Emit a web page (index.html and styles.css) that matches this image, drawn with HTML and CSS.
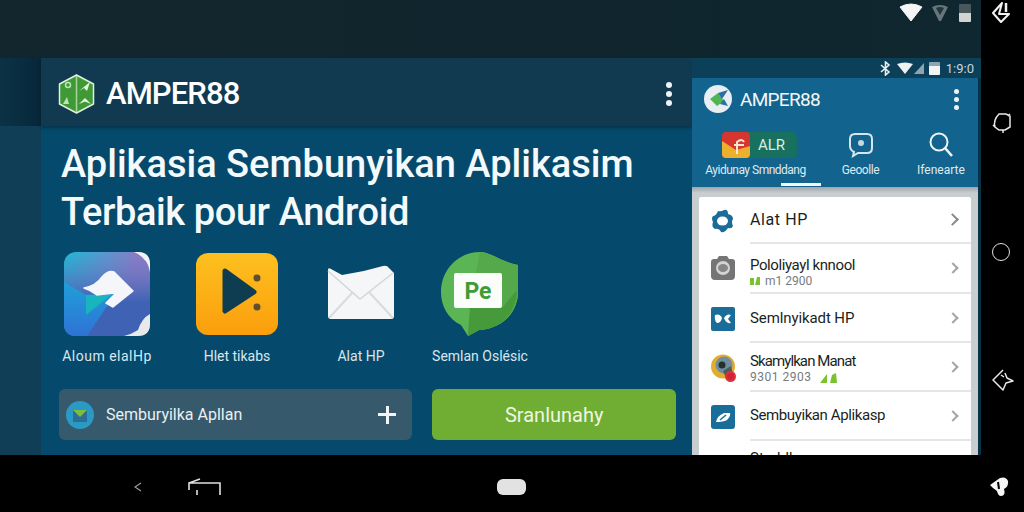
FILE: index.html
```html
<!DOCTYPE html>
<html lang="en">
<head>
    <meta charset="UTF-8">
    <title>AMPER88</title>
    <link rel="stylesheet" href="styles.css">
</head>
<body>
<div class="screen">

    <div class="main">
        <!-- top dark band -->
        <div class="top-band">
            <svg class="top-wifi" width="24" height="19" viewBox="0 0 24 19"><path d="M1 4Q12 -2 23 4L12 18Z" fill="#f4f6f6" stroke="#f4f6f6" stroke-linejoin="round"/></svg>
            <svg class="top-cell" width="18" height="19" viewBox="0 0 18 19"><path d="M1 4Q9 0 17 4L10 18H8Z" fill="#66767a"/><path d="M5 5Q9 3 13 5L9 12Z" fill="#22363d"/></svg>
            <div class="top-batt"></div>
        </div>

        <div class="content">
            <!-- left sliver -->
            <div class="sliver">
                <div class="sliver-head"></div>
            </div>

            <!-- center panel -->
            <div class="panel">
                <div class="panel-head">
                    <svg width="37" height="40" viewBox="0 0 37 40">
                        <path d="M18.500 1L35.500 10V30L18.500 39L1.500 30V10Z" fill="#3f9a35" stroke="#dff0dc" stroke-width="1.500" stroke-linejoin="round"/>
                        <path d="M18.500 2V38" stroke="#a9d4a0" stroke-width="1.500"/>
                        <circle cx="10" cy="11" r="2.500" fill="none" stroke="#bfe2b8" stroke-width="1.500"/>
                        <path d="M5 30L9 23L11 30Z" fill="#bfe2b8"/>
                        <path d="M21 17L32 8L29 17L26 14Z" fill="#e6f4e2"/>
                        <path d="M21 30L27 24L33 30L27 27.500Z" fill="#e6f4e2"/>
                    </svg>
                    <span class="brand">AMPER88</span>
                    <div class="dots"><i></i><i></i><i></i></div>
                </div>

                <div class="panel-body">
                    <h1>Aplikasia Sembunyikan Aplikasim<br><span class="line-two">Terbaik pour Android</span></h1>

                    <div class="apps">
                        <div class="app app-1">
                            <svg width="86" height="84" viewBox="0 0 86 84">
                                <defs>
                                    <linearGradient id="g1" x1="0" y1="0" x2="1" y2="0.300">
                                        <stop offset="0" stop-color="#1cb9d6"/>
                                        <stop offset="0.800" stop-color="#8a7cc6"/>
                                    </linearGradient>
                                    <linearGradient id="g1c" x1="0" y1="0" x2="0" y2="1">
                                        <stop offset="0" stop-color="#6a76c0" stop-opacity="0"/>
                                        <stop offset="0.600" stop-color="#3f62b4"/>
                                    </linearGradient>
                                    <linearGradient id="g1b" x1="0" y1="0" x2="0" y2="1">
                                        <stop offset="0" stop-color="#1fa0d8"/>
                                        <stop offset="1" stop-color="#2f72d6"/>
                                    </linearGradient>
                                </defs>
                                <rect width="86" height="84" rx="12" fill="url(#g1)"/>
                                <rect width="86" height="84" rx="12" fill="url(#g1c)"/>
                                <path d="M0 30V72Q0 84 12 84H23L52 41L22 43Z" fill="url(#g1b)"/>
                                <path d="M22 43H47L22 63Z" fill="#18b5bf"/>
                                <path d="M70 0H74Q86 0 86 12V20Q84 6 70 0Z" fill="#f2f3f6"/>
                                <path d="M60 84H74Q86 84 86 72V62Q78 66 74 78Q68 82 60 84Z" fill="#e8e9eb"/>
                                <path d="M20 36Q32 34 38 25Q44 18 50 20L69 39L49 55L42 51L52 41Q40 42 33 43Q27 38 20 36Z" fill="#f5f6fa" stroke="#f5f6fa" stroke-linejoin="round" stroke-width="1.500"/>
                            </svg>
                            <span class="app-label">Aloum elalHp</span>
                        </div>
                        <div class="app app-2">
                            <svg width="82" height="84" viewBox="0 0 82 84">
                                <defs>
                                    <linearGradient id="g2" x1="0" y1="0" x2="0" y2="1">
                                        <stop offset="0" stop-color="#fdc01f"/>
                                        <stop offset="1" stop-color="#fb9e0c"/>
                                    </linearGradient>
                                </defs>
                                <rect y="1" width="82" height="82" rx="12" fill="url(#g2)"/>
                                <path d="M29 19L58 40L29 59Z" fill="#0e3c50" stroke="#0e3c50" stroke-width="5" stroke-linejoin="round"/>
                                <circle cx="61" cy="26" r="3.500" fill="#5d5030"/>
                                <circle cx="61" cy="55" r="3.500" fill="#5d5030"/>
                            </svg>
                            <span class="app-label">Hlet tikabs</span>
                        </div>
                        <div class="app app-3">
                            <svg width="68" height="84" viewBox="0 0 68 84">
                                <path d="M1 18Q1 15 4 17L15 23Q36 20 56 14Q60 13 62 16L67 21V64Q67 67 64 67H4Q1 67 1 64Z" fill="#f4f6f7"/>
                                <path d="M1 19L33 47L66 21" fill="none" stroke="#d3d7da" stroke-width="1.500"/>
                                <path d="M2 66L26 40M66 66L42 40" stroke="#d8dcdf" stroke-width="2"/>
                            </svg>
                            <span class="app-label">Alat HP</span>
                        </div>
                        <div class="app app-4">
                            <svg width="78" height="84" viewBox="0 0 78 84">
                                <path d="M39 0C50 0 58 9 77 13V40C77 61 60 77 38 78L27 84L20 73C7 67 0 54 0 40C0 18 17 0 39 0Z" fill="#5cb555"/>
                                <path d="M39 0C50 0 58 9 77 13V40C77 61 60 77 38 78L27 84L29 50Z" fill="#56a94a"/>
                                <path d="M29 56H61L76 38C76 60 60 77 38 78L27 84Z" fill="#479a3a"/>
                                <rect x="13" y="21" width="48" height="35" rx="2" fill="#fbfdfb"/>
                                <text x="37" y="47" class="pe">Pe</text>
                            </svg>
                            <span class="app-label">Semlan Oslésic</span>
                        </div>
                    </div>

                    <div class="actions">
                        <div class="search-box">
                            <svg width="28" height="30" viewBox="0 0 28 30">
                                <circle cx="14" cy="15" r="14" fill="#2a9ac4"/>
                                <path d="M7 10H21V22H7Z" fill="#2c6e96"/>
                                <path d="M7 10H21L14 17Z" fill="#7cbe3c"/>
                            </svg>
                            <span>Semburyilka Apllan</span>
                            <span class="plus"></span>
                        </div>
                        <div class="go-btn">Sranlunahy</div>
                    </div>
                </div>
            </div>

            <!-- phone panel on the right -->
            <div class="phone">
                <div class="phone-status">
                    <svg width="13" height="15" viewBox="0 0 13 15"><path d="M2 4L10 11L6.500 14V1L10 4L2 11" fill="none" stroke="#e8eef0" stroke-width="1.600"/></svg>
                    <svg class="st-wifi" width="28" height="13" viewBox="0 0 28 13"><path d="M0 2Q8 -1 16 2L8 12Z" fill="#eef2f3"/><path d="M17 12L27 1V12Z" fill="#8ea4ae"/></svg>
                    <div class="st-batt"></div>
                    <span class="st-time">1:9:0</span>
                </div>

                <div class="app-bar">
                    <div class="bar-top">
                        <svg width="28" height="28" viewBox="0 0 28 28">
                            <circle cx="14" cy="14" r="14" fill="#e8eef2"/>
                            <path d="M6 14L14 8L20 16L13 21Z" fill="#52b554"/>
                            <path d="M14 8L24 5L18 14ZM16 19L24 21L20 14Z" fill="#2a6fa8"/>
                        </svg>
                        <span class="bar-brand">AMPER88</span>
                        <div class="dots small"><i></i><i></i><i></i></div>
                    </div>
                    <div class="tabs">
                        <div class="tab tab-first">
                            <div class="tab-pill">
                                <svg width="28" height="26" viewBox="0 0 28 26">
                                    <rect width="28" height="26" rx="4" fill="#d5362f"/>
                                    <path d="M0 9L14 18L28 14V22Q28 26 24 26H4Q0 26 0 22Z" fill="#edb02e"/>
                                    <path d="M15 22L15 10Q20 6 22 10M12 13H22" fill="none" stroke="#f6e8d0" stroke-width="2"/>
                                </svg>
                                <span>ALR</span>
                            </div>
                            <span class="tab-label">Ayidunay Smnddang</span>
                        </div>
                        <div class="tab tab-second">
                            <svg width="26" height="26" viewBox="0 0 26 26">
                                <path d="M7 2H19Q24 2 24 7V16Q24 21 19 21H10L5 24L6 20Q2 18 2 14V7Q2 2 7 2Z" fill="none" stroke="#d7e6ec" stroke-width="2"/>
                                <circle cx="13" cy="11" r="3" fill="#c3d8e0"/>
                            </svg>
                            <span class="tab-label">Geoolle</span>
                        </div>
                        <div class="tab tab-third">
                            <svg width="26" height="26" viewBox="0 0 26 26">
                                <circle cx="11" cy="10" r="8.500" fill="none" stroke="#eef4f6" stroke-width="2"/>
                                <path d="M17 16L24 24" stroke="#eef4f6" stroke-width="2.500"/>
                            </svg>
                            <span class="tab-label">Ifenearte</span>
                        </div>
                    </div>
                    <div class="tab-line"></div>
                </div>

                <div class="list-wrap">
                    <div class="list">
                        <div class="row row-1">
                            <div class="row-icon">
                                <svg width="23" height="24" viewBox="0 0 23 24"><path d="M7 2Q10 3 13 1Q17 0 17 5Q22 6 22 10Q20 13 22 17Q21 20 17 19Q14 24 10 23Q8 19 4 20Q0 18 2 13Q0 9 2 7Q5 7 7 2Z" fill="#1a6d99"/><ellipse cx="11.500" cy="12" rx="5.500" ry="4.500" fill="#fff"/></svg>
                            </div>
                            <div class="row-body">
                                <div class="row-text"><span class="row-title">Alat HP</span></div>
                                <span class="chev big"></span>
                            </div>
                        </div>
                        <div class="row row-2">
                            <div class="row-icon">
                                <svg width="24" height="25" viewBox="0 0 24 25"><path d="M6 4L8 1H16L18 4H21Q24 4 24 7V21Q24 25 20 25H4Q0 25 0 21V7Q0 4 3 4Z" fill="#757575"/><circle cx="12" cy="13" r="7" fill="#d2d4d4"/><ellipse cx="12" cy="13" rx="5" ry="4" fill="#858787"/></svg>
                            </div>
                            <div class="row-body">
                                <div class="row-text">
                                    <span class="row-title">Pololiyayl knnool</span>
                                    <span class="row-sub"><svg width="12" height="8" viewBox="0 0 12 8"><path d="M0 8V1H4V8ZM5 8L7 0H10V8Z" fill="#7cc133"/></svg> m1 2900</span>
                                </div>
                                <span class="chev"></span>
                            </div>
                        </div>
                        <div class="row row-3">
                            <div class="row-icon">
                                <svg width="24" height="24" viewBox="0 0 24 24"><rect width="24" height="24" rx="2" fill="#1a6d99"/><path d="M4 8Q9 6 11 11Q10 16 6 16Q3 13 4 8ZM13 11Q16 6 20 8L17 12L20 16Q15 17 13 11Z" fill="#fff"/></svg>
                            </div>
                            <div class="row-body">
                                <div class="row-text"><span class="row-title">Semlnyikadt HP</span></div>
                                <span class="chev"></span>
                            </div>
                        </div>
                        <div class="row row-4">
                            <div class="row-icon">
                                <svg width="24" height="25" viewBox="0 0 24 25"><circle cx="12" cy="12.500" r="12" fill="#e3ac2c"/><circle cx="13" cy="11" r="8.500" fill="#6f8fa0"/><circle cx="11" cy="11" r="3.500" fill="#27302a"/><path d="M12 17L20 12L22 20L15 24Z" fill="#4f5a52"/></svg>
                                <span class="badge"></span>
                            </div>
                            <div class="row-body">
                                <div class="row-text">
                                    <span class="row-title">Skamylkan Manat</span>
                                    <span class="row-sub">9301 2903 <svg class="leaf" width="18" height="10" viewBox="0 0 18 10"><path d="M0 10L7 1V10ZM10 10L12 2L16 0L17 10Z" fill="#7cc133"/></svg></span>
                                </div>
                                <span class="chev"></span>
                            </div>
                        </div>
                        <div class="row row-5">
                            <div class="row-icon">
                                <svg width="24" height="24" viewBox="0 0 24 24"><rect width="24" height="24" rx="3" fill="#1a6d99"/><path d="M5 17Q6 11 13 8L19 8Q20 11 16 15Q12 17 5 17Z" fill="#fff"/><path d="M9 15L15 10" stroke="#1a6d99" stroke-width="1.500"/></svg>
                            </div>
                            <div class="row-body">
                                <div class="row-text"><span class="row-title">Sembuyikan Aplikasp</span></div>
                                <span class="chev"></span>
                            </div>
                        </div>
                        <div class="row row-6">
                            <div class="row-icon"><span class="cut-circle"></span></div>
                            <div class="row-body"><div class="row-text"><span class="row-title">Studdkaan</span></div></div>
                        </div>
                    </div>
                </div>
            </div>
        </div>
    </div>

    <!-- right black rail -->
    <div class="rail">
        <svg width="20" height="21" viewBox="0 0 20 21"><path d="M10 1L1 11L9 20L17 12H7Z" fill="none" stroke="#f2f2f2" stroke-width="2" stroke-linejoin="round"/><path d="M14 1V10" stroke="#f2f2f2" stroke-width="2.500"/></svg>
        <svg class="rail-b" width="20" height="22" viewBox="0 0 20 22"><path d="M7 2H14L18 4V15L13 18H7L3 15Q1 8 7 2ZM18 2L16 4M3 15L1 13M11 18V21" fill="none" stroke="#e8e8e8" stroke-width="1.500"/></svg>
        <div class="rail-circle"></div>
        <svg class="rail-c" width="22" height="22" viewBox="0 0 22 22"><path d="M11 1L1 11L11 21L14 14L21 12L15 9L13 4M9 6L12 8" fill="none" stroke="#e8e8e8" stroke-width="1.500" stroke-linejoin="round"/></svg>
    </div>

    <!-- bottom nav -->
    <div class="nav">
        <svg class="nav-back" width="8" height="10" viewBox="0 0 8 10"><path d="M7 1L1 5L7 9" fill="none" stroke="#9a9a9a" stroke-width="1.300"/></svg>
        <svg class="nav-recent" width="33" height="18" viewBox="0 0 33 18"><path d="M1 12V5H32V17M1 5L12 1M9 12V17" fill="none" stroke="#e0e0e0" stroke-width="1.600"/></svg>
        <div class="nav-home"></div>
        <svg class="nav-end" width="20" height="21" viewBox="0 0 20 21"><path d="M0 9L10 2Q16 0 18 5Q19 10 14 13Q16 20 11 20Q8 20 7 15L3 12Z" fill="#f6f6f6"/><path d="M8 6L9 13" stroke="#000" stroke-width="2"/></svg>
    </div>

</div>
</body>
</html>
```

FILE: styles.css
```css
/* page frame */
* {
    box-sizing: border-box;
}

body {
    margin: 0;
    background: #000;
    font-family: 'Roboto', sans-serif;
    overflow: hidden;
}

.screen {
    width: 1024px;
    height: 512px;
    display: grid;
    grid-template-columns: 981px 43px;
    grid-template-rows: 455px 57px;
    background: #000;
}

.main {
    display: flex;
    flex-direction: column;
    overflow: hidden;
}

/* top band */
.top-band {
    height: 58px;
    flex: none;
    background: linear-gradient(to right, #13262e, #10252d 60%, #0f2730);
    display: flex;
    justify-content: flex-end;
    align-items: flex-start;
    padding: 3px 10px 0 0;
}

.top-wifi {
    margin-right: 8px;
}

.top-cell {
    margin-right: 10px;
}

.top-batt {
    width: 12px;
    height: 18px;
    margin-top: 1px;
    border-radius: 1px;
    background: linear-gradient(to bottom, #47575b 50%, #d2d4d4 50%);
}

.content {
    flex: 1;
    display: flex;
    min-height: 0;
}

/* left sliver */
.sliver {
    width: 41px;
    flex: none;
    background: #103e56;
}

.sliver-head {
    height: 68px;
    background: linear-gradient(to right, #0c3246, #07273a);
}

/* center panel */
.panel {
    width: 651px;
    flex: none;
    display: flex;
    flex-direction: column;
    background: #054a6c;
}

.panel-head {
    height: 68px;
    flex: none;
    display: flex;
    align-items: center;
    padding: 3px 20px 0 17px;
    background: #113a50;
    box-shadow: 0 2px 3px rgba(0, 20, 30, 0.4);
}

.brand {
    margin-left: 11px;
    font-size: 31px;
    font-weight: 500;
    letter-spacing: -0.9px;
    color: #fff;
}

.dots {
    margin-left: auto;
    display: flex;
    flex-direction: column;
    gap: 3px;
}

.dots i {
    width: 6px;
    height: 6px;
    border-radius: 50%;
    background: #eef3f5;
}

.dots.small i {
    width: 5px;
    height: 5px;
}

.panel-body {
    flex: 1;
    padding: 14px 16px 0 18px;
}

h1 {
    margin: 0 0 0 2px;
    font-size: 38px;
    line-height: 48px;
    font-weight: 500;
    color: #f4fafc;
    white-space: nowrap;
}

.line-two {
    letter-spacing: -0.4px;
}

.apps {
    display: flex;
    gap: 47px;
    margin: 16px 0 0 5px;
}

.app {
    display: flex;
    flex-direction: column;
    align-items: center;
}

.app-1 { width: 86px; }
.app-2 { width: 82px; margin-left: -1px; }
.app-3 { width: 68px; margin-left: 2px; }
.app-4 { width: 78px; margin-left: -1px; }

.app svg {
    display: block;
    flex: none;
}

.app-label {
    margin-top: 11px;
    font-size: 14px;
    line-height: 18px;
    color: #d9e6ec;
    white-space: nowrap;
}

.app-1 .app-label {
    letter-spacing: 0.5px;
}

.pe {
    font-family: 'Roboto', sans-serif;
    font-size: 23px;
    font-weight: 700;
    fill: #3f9a38;
    text-anchor: middle;
}

.actions {
    display: flex;
    gap: 20px;
    margin-top: 24px;
}

.search-box {
    width: 354px;
    height: 51px;
    display: flex;
    align-items: center;
    gap: 12px;
    padding: 0 16px 0 7px;
    border-radius: 6px;
    background: #36596c;
    color: #eaf0f3;
    font-size: 16px;
}

.plus {
    margin-left: auto;
    width: 18px;
    height: 18px;
    background:
        linear-gradient(#f2f5f6, #f2f5f6) center / 18px 3px no-repeat,
        linear-gradient(#f2f5f6, #f2f5f6) center / 3px 18px no-repeat;
    border-radius: 1px;
}

.go-btn {
    width: 244px;
    height: 51px;
    display: flex;
    align-items: center;
    justify-content: center;
    border-radius: 6px;
    background: #6fae33;
    color: #eef6e4;
    font-size: 20px;
}

/* phone panel */
.phone {
    width: 289px;
    flex: none;
    display: flex;
    flex-direction: column;
    background: #0a3246;
}

.phone-status {
    height: 20px;
    flex: none;
    display: flex;
    align-items: center;
    justify-content: flex-end;
    padding-right: 7px;
    background: #0c4059;
}

.st-wifi {
    margin-left: 5px;
}

.st-batt {
    width: 11px;
    height: 13px;
    margin-left: 4px;
    border-radius: 1px;
    background: linear-gradient(to bottom, #8ea4ae 30%, #f2f4f4 30%);
}

.st-time {
    margin-left: 6px;
    font-size: 13px;
    color: #c9d6dc;
}

.app-bar {
    height: 109px;
    width: 286px;
    flex: none;
    display: flex;
    flex-direction: column;
    background: #12648e;
    padding-top: 7px;
}

.bar-top {
    display: flex;
    align-items: center;
    padding: 0 19px 0 12px;
}

.bar-brand {
    margin-left: 8px;
    font-size: 19px;
    color: #f3f7f9;
    letter-spacing: -0.7px;
}

.tabs {
    display: flex;
    margin-top: 19px;
    height: 46px;
}

.tab {
    display: flex;
    flex-direction: column;
    align-items: center;
    color: #dfeaef;
}

.tab svg {
    display: block;
}

.tab-first {
    width: 127px;
}

.tab-second {
    width: 79px;
    margin-left: 2px;
}

.tab-third {
    width: 66px;
    margin-left: 8px;
}

.tab-pill {
    display: flex;
    align-items: center;
    width: 75px;
    height: 26px;
    margin-left: 8px;
    border-radius: 5px;
    background: #18705f;
    font-size: 15px;
    color: #d6efe4;
}

.tab-pill span {
    margin-left: 8px;
}

.tab-label {
    margin-top: 5px;
    font-size: 12px;
    line-height: 15px;
    white-space: nowrap;
}

.tab-first .tab-label {
    letter-spacing: -0.5px;
}

.tab-second .tab-label {
    letter-spacing: -0.4px;
}

.tab-line {
    width: 40px;
    height: 3px;
    margin: auto 0 0 89px;
    background: #f4f7f8;
    position: relative;
    top: -1px;
}

.list-wrap {
    flex: 1;
    width: 286px;
    min-height: 0;
    background: linear-gradient(to bottom, #9da6aa, #c8cdcf 6px);
    padding: 10px 7px 0 7px;
    overflow: hidden;
}

.list {
    background: #fff;
    border-radius: 2px 2px 0 0;
}

.row {
    display: flex;
    color: #1b1f22;
}

.row-1 { height: 47px; }
.row-2 { height: 50px; }
.row-3 { height: 49px; }
.row-4 { height: 49px; }
.row-5 { height: 49px; }
.row-6 { height: 40px; }

.row-icon {
    width: 51px;
    flex: none;
    display: flex;
    align-items: center;
    padding-left: 12px;
    position: relative;
}

.row-2 .row-icon {
    padding-bottom: 4px;
}

.row-4 .row-icon {
    padding-bottom: 2px;
}

.row-body {
    flex: 1;
    display: flex;
    align-items: center;
    padding-right: 14px;
    border-bottom: 2px solid #e3e5e6;
}

.row-6 .row-body {
    border-bottom: none;
    align-items: flex-start;
    padding-top: 8px;
}

.row-text {
    display: flex;
    flex-direction: column;
}

.row-title {
    font-size: 15px;
    line-height: 18px;
}

.row-1 .row-title {
    font-size: 16px;
    letter-spacing: 0.6px;
}

.row-2 .row-text {
    padding-top: 8px;
}

.row-2 .row-title {
    letter-spacing: -0.4px;
}

.row-3 .row-title {
    letter-spacing: -0.1px;
}

.row-4 .row-text {
    padding-top: 4px;
}

.row-4 .row-title {
    letter-spacing: -0.9px;
}

.row-5 .row-text {
    padding-bottom: 2px;
}

.row-5 .row-title {
    letter-spacing: -0.4px;
}

.row-sub {
    font-size: 12px;
    line-height: 15px;
    color: #757b7e;
    letter-spacing: 0.5px;
    display: flex;
    align-items: center;
    gap: 3px;
}

.row-2 .row-sub {
    letter-spacing: 0;
}

.leaf {
    margin-left: 6px;
}

.chev {
    margin-left: auto;
    width: 8px;
    height: 8px;
    border-top: 2px solid #a2a6a8;
    border-right: 2px solid #a2a6a8;
    transform: rotate(45deg);
}

.chev.big {
    width: 9px;
    height: 9px;
    border-width: 2.5px;
    border-color: #85898b;
}

.badge {
    position: absolute;
    left: 26px;
    top: 28px;
    width: 11px;
    height: 11px;
    border-radius: 50%;
    background: #d32434;
    border: 2px solid #e0303f;
}

.cut-circle {
    width: 24px;
    height: 24px;
    margin-top: 16px;
    border-radius: 50%;
    background: #1a6d99;
}

/* right rail */
.rail {
    display: flex;
    flex-direction: column;
    align-items: flex-start;
    padding: 2px 0 0 11px;
}

.rail svg {
    display: block;
}

.rail-b {
    margin-top: 89px;
}

.rail-circle {
    width: 18px;
    height: 18px;
    margin-top: 109px;
    border: 1.5px solid #e2e2e2;
    border-radius: 50%;
}

.rail-c {
    margin-top: 108px;
}

/* bottom nav */
.nav {
    grid-column: 1 / 3;
    display: flex;
    align-items: center;
    padding: 6px 14px 0 134px;
    background: #000;
}

.nav-recent {
    margin-left: 46px;
}

.nav-home {
    width: 29px;
    height: 16px;
    margin-left: 276px;
    border-radius: 6px;
    background: #e2e2e2;
}

.nav-end {
    margin-left: auto;
}
```
